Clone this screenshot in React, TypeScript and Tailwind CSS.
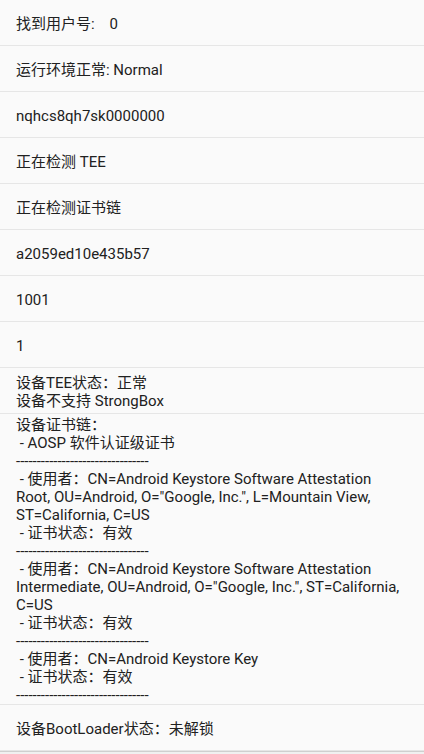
const font = { fontFamily: '"Roboto", "Noto Sans CJK SC", sans-serif' }

const DASH = "--------------------------------"

const simpleRows = [
  "找到用户号:    0",
  "运行环境正常: Normal",
  "nqhcs8qh7sk0000000",
  "正在检测 TEE",
  "正在检测证书链",
  "a2059ed10e435b57",
  "1001",
  "1",
]

const teeLines = ["设备TEE状态：正常", "设备不支持 StrongBox"]

const chainLines = [
  "设备证书链：",
  " - AOSP 软件认证级证书",
  DASH,
  " - 使用者：CN=Android Keystore Software Attestation",
  "Root, OU=Android, O=\"Google, Inc.\", L=Mountain View,",
  "ST=California, C=US",
  " - 证书状态：有效",
  DASH,
  " - 使用者：CN=Android Keystore Software Attestation",
  "Intermediate, OU=Android, O=\"Google, Inc.\", ST=California,",
  "C=US",
  " - 证书状态：有效",
  DASH,
  " - 使用者：CN=Android Keystore Key",
  " - 证书状态：有效",
  DASH,
]

function Row({ lines }: { lines: string[] }) {
  return (
    <div className="min-h-[46px] flex items-center border-b border-[#e6e6e6] px-4 pt-[2px]">
      <div className="text-[15px] leading-[18px] text-[#212121] whitespace-pre">
        {lines.map((l, i) => (
          <div key={i}>{l}</div>
        ))}
      </div>
    </div>
  )
}

export default function App() {
  return (
    <div className="w-[424px] h-[754px] bg-[#fafafa] flex flex-col overflow-hidden" style={font}>
      {simpleRows.map((r, i) => (
        <Row key={i} lines={[r]} />
      ))}
      <Row lines={teeLines} />
      <Row lines={chainLines} />
      <Row lines={["设备BootLoader状态：未解锁"]} />
      <div className="flex-1 border-t border-[#cfcfcf] bg-[#f0f0f0]" />
    </div>
  )
}
